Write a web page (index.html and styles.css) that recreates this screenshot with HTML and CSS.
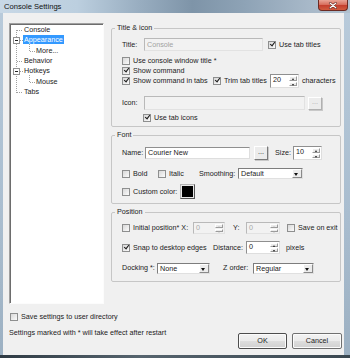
FILE: index.html
```html
<!DOCTYPE html>
<html lang="en">
<head>
    <meta charset="UTF-8">
    <link rel="stylesheet" href="styles.css">
    <title>Console Settings</title>
</head>
<body>
    <div class="window">
        <!-- title bar -->
        <div class="titlebar">
            <span class="title">Console Settings</span>
            <span class="close">
                <svg width="30" height="11" viewBox="0 0 30 11">
                    <path d="M12 3 L18 8 M18 3 L12 8" stroke="#5a1f18" stroke-width="2.6" stroke-linecap="round"/>
                    <path d="M12 3 L18 8 M18 3 L12 8" stroke="#fff" stroke-width="1.4" stroke-linecap="round"/>
                </svg>
            </span>
        </div>

        <div class="client">
            <div class="main">
                <!-- tree -->
                <div class="tree">
                    <svg class="tree-lines" width="93" height="80" viewBox="0 0 93 80">
                        <g stroke="#a0a0a0" stroke-width="1" stroke-dasharray="1 1" fill="none">
                            <path d="M6.5 6 V69"/>
                            <path d="M7 6.5 H13 M10 16.5 H13 M7 37.5 H13 M10 47.5 H13 M7 68.5 H13"/>
                            <path d="M19.5 20 V27 M20 27.5 H25 M19.5 51 V58 M20 58.5 H25"/>
                        </g>
                        <g stroke="#919191" fill="#fff">
                            <rect x="3.5" y="13.5" width="6" height="6"/>
                            <rect x="3.5" y="44.5" width="6" height="6"/>
                        </g>
                        <g stroke="#222">
                            <path d="M5 16.5 H8 M5 47.5 H8"/>
                        </g>
                    </svg>
                    <div class="node">Console</div>
                    <div class="node"><span class="selected">Appearance</span></div>
                    <div class="node child">More...</div>
                    <div class="node">Behavior</div>
                    <div class="node">Hotkeys</div>
                    <div class="node child">Mouse</div>
                    <div class="node">Tabs</div>
                </div>

                <div class="pages">
                    <!-- Title & icon -->
                    <fieldset class="group group-title">
                        <legend>Title &amp; icon</legend>
                        <div class="row row-a">
                            <span class="lbl w-22">Title:</span>
                            <span class="field disabled w-title">Console</span>
                            <label class="check ml-5"><span class="cb on"></span>Use tab titles</label>
                        </div>
                        <div class="row row-b">
                            <label class="check"><span class="cb"></span>Use console window title *</label>
                        </div>
                        <div class="row row-c">
                            <label class="check"><span class="cb on"></span>Show command</label>
                        </div>
                        <div class="row row-c">
                            <label class="check w-91"><span class="cb on"></span>Show command in tabs</label>
                            <label class="check w-57"><span class="cb on"></span>Trim tab titles</label>
                            <span class="spin w-29 h-14"><span class="val">20</span><span class="arrows"><i class="up"></i><i class="down"></i></span></span>
                            <span class="lbl ml-3">characters</span>
                        </div>
                        <div class="row row-e">
                            <span class="lbl w-22">Icon:</span>
                            <span class="field disabled w-icon"></span>
                            <span class="btn-small disabled ml-3">...</span>
                        </div>
                        <div class="row row-f">
                            <label class="check ml-21"><span class="cb on"></span>Use tab icons</label>
                        </div>
                    </fieldset>

                    <!-- Font -->
                    <fieldset class="group group-font">
                        <legend>Font</legend>
                        <div class="row row-name">
                            <span class="lbl w-23">Name:</span>
                            <span class="field w-name">Courier New</span>
                            <span class="btn-small h-14 ml-4">...</span>
                            <span class="lbl ml-7 w-18">Size:</span>
                            <span class="spin w-29 h-14"><span class="val">10</span><span class="arrows"><i class="up"></i><i class="down"></i></span></span>
                        </div>
                        <div class="row row-bold">
                            <label class="check w-36"><span class="cb"></span>Bold</label>
                            <label class="check w-41"><span class="cb"></span>Italic</label>
                            <span class="lbl w-39">Smoothing:</span>
                            <span class="select w-65"><span class="val">Default</span><span class="drop"></span></span>
                        </div>
                        <div class="row row-color">
                            <label class="check w-58"><span class="cb"></span>Custom color:</label>
                            <span class="swatch"></span>
                        </div>
                    </fieldset>

                    <!-- Position -->
                    <fieldset class="group group-pos">
                        <legend>Position</legend>
                        <div class="row row-p1">
                            <label class="check w-71"><span class="cb"></span>Initial position* X:</label>
                            <span class="spin disabled w-32 h-12"><span class="val">0</span><span class="arrows"><i class="up"></i><i class="down"></i></span></span>
                            <span class="lbl ml-8 w-13">Y:</span>
                            <span class="spin disabled w-34 h-12"><span class="val">0</span><span class="arrows"><i class="up"></i><i class="down"></i></span></span>
                            <label class="check ml-7"><span class="cb"></span>Save on exit</label>
                        </div>
                        <div class="row row-p2">
                            <label class="check w-91"><span class="cb on"></span>Snap to desktop edges</label>
                            <span class="lbl w-33">Distance:</span>
                            <span class="spin w-34 h-13"><span class="val">0</span><span class="arrows"><i class="up"></i><i class="down"></i></span></span>
                            <span class="lbl ml-6">pixels</span>
                        </div>
                        <div class="row row-p3">
                            <span class="lbl w-35">Docking *:</span>
                            <span class="select w-53"><span class="val">None</span><span class="drop"></span></span>
                            <span class="lbl ml-13 w-30">Z order:</span>
                            <span class="select w-61"><span class="val">Regular</span><span class="drop"></span></span>
                        </div>
                    </fieldset>
                </div>
            </div>

            <label class="check save-row"><span class="cb"></span>Save settings to user directory</label>

            <div class="footer">
                <span class="note">Settings marked with * will take effect after restart</span>
                <div class="buttons">
                    <span class="btn btn-default">OK</span>
                    <span class="btn btn-cancel">Cancel</span>
                </div>
            </div>
        </div>
        <div class="bottom-strip"></div>
    </div>
</body>
</html>
```

FILE: styles.css
```css
/* page */
body {
    margin: 0;
    font-family: "Liberation Sans", Arial, sans-serif;
    font-size: 7.2px;
    line-height: 10px;
    color: #1b1b1b;
    background: #4a5a66;
}

.window {
    width: 350px;
    height: 358px;
    display: flex;
    flex-direction: column;
    background: linear-gradient(180deg, #b9cbdb 0%, #a9bdcf 60%, #9cb0c2 100%);
    overflow: hidden;
}

/* title bar (aero glass) */
.titlebar {
    height: 13px;
    flex: none;
    display: flex;
    align-items: flex-start;
    background: linear-gradient(90deg, #c8d8e6 0%, #bccfdf 22%, #98adc0 40%, #7e94a8 55%, #8ea3b6 70%, #a7b8c8 88%, #b1c1cf 100%);
}

.title {
    font-size: 7.6px;
    line-height: 9px;
    padding: 2px 0 0 4px;
    color: #111;
}

.close {
    margin-left: auto;
    margin-right: 2px;
    width: 30px;
    height: 11px;
    display: flex;
    border: 1px solid #6b2a22;
    border-top: 0;
    border-radius: 0 0 4px 4px;
    box-sizing: border-box;
    background: linear-gradient(180deg, #e9a597 0%, #d8705f 45%, #c4402f 55%, #d15b3f 100%);
}

/* client area */
.client {
    height: 342px;
    flex: none;
    margin: 0 6px 0 3px;
    padding: 10px 2px 6px 6px;
    box-sizing: border-box;
    background: #f0f0f0;
    display: flex;
    flex-direction: column;
}

.bottom-strip {
    flex: 1;
    background: linear-gradient(90deg, #2f3b44, #56646e 40%, #3a4750);
}

.main {
    display: flex;
    gap: 7px;
}

/* tree view */
.tree {
    position: relative;
    width: 95px;
    height: 281px;
    box-sizing: border-box;
    padding-top: 1px;
    background: #fff;
    border: 1px solid;
    border-color: #a0a0a0 #fcfcfc #fcfcfc #a0a0a0;
    box-shadow: inset 1px 1px 0 #6d6d6d;
}

.tree-lines {
    position: absolute;
    left: 0;
    top: 0;
}

.node {
    height: 10.33px;
    line-height: 10.33px;
    padding-left: 14px;
    white-space: nowrap;
}

.node.child {
    padding-left: 26px;
}

.selected {
    display: inline-block;
    line-height: 9px;
    padding: 0 1px;
    margin-left: -1px;
    background: #3399ff;
    color: #fff;
}

/* group boxes */
.pages {
    width: 230px;
    display: flex;
    flex-direction: column;
    gap: 3px;
}

.group {
    margin: 0;
    padding: 0 4px 0 10px;
    min-width: 0;
    border: 1px solid #c6c6c6;
    border-radius: 2px;
}

.group legend {
    padding: 0 2px;
    margin-left: -7px;
    line-height: 10px;
}

.group-title { padding-bottom: 3px; }
.group-font { padding-bottom: 4px; }
.group-pos { padding-bottom: 7px; }

.row {
    display: flex;
    align-items: center;
    white-space: nowrap;
}

.row-a { margin-top: 5px; height: 13px; }
.row-b { margin-top: 5px; height: 9px; }
.row-c { margin-top: 1px; height: 10px; }
.row-c + .row-c { margin-top: 0; }
.row-e { margin-top: 10px; height: 14px; }
.row-f { margin-top: 3px; height: 10px; }

.row-name { margin-top: 6px; height: 14px; }
.row-bold { margin-top: 8px; height: 11px; }
.row-color { margin-top: 5px; height: 15px; }

.row-p1 { margin-top: 5px; height: 12px; }
.row-p2 { margin-top: 7px; height: 13px; }
.row-p3 { margin-top: 8px; height: 12px; }

/* checkboxes */
.check {
    display: flex;
    align-items: center;
    flex: none;
}

.cb {
    position: relative;
    width: 8px;
    height: 8px;
    flex: none;
    box-sizing: border-box;
    margin-right: 3px;
    border: 1px solid #8e8f8f;
    background: linear-gradient(135deg, #d8d8d8, #fbfbfb);
}

.cb.on::after {
    content: "";
    position: absolute;
    left: 2px;
    top: -1px;
    width: 2px;
    height: 4px;
    border: solid #1c1c1c;
    border-width: 0 1.5px 1.5px 0;
    transform: rotate(38deg);
}

/* text fields */
.lbl {
    flex: none;
}

.field {
    height: 13px;
    box-sizing: border-box;
    padding-left: 2px;
    line-height: 11px;
    border: 1px solid;
    border-color: #8f8f8f #dedede #dedede #8f8f8f;
    background: #fff;
    flex: none;
}

.field.w-name {
    height: 12px;
    line-height: 10px;
}

.field.disabled {
    height: 14px;
    background: #f2f2f2;
    color: #a2a2a2;
    border-color: #b9b9b9 #e2e2e2 #e2e2e2 #b9b9b9;
}

.row-a .field.disabled { height: 13px; }

.btn-small {
    width: 14px;
    height: 13px;
    box-sizing: border-box;
    flex: none;
    display: flex;
    align-items: center;
    justify-content: center;
    padding-bottom: 2px;
    border: 1px solid;
    border-color: #fff #7a7a7a #7a7a7a #fff;
    box-shadow: 1px 1px 0 #c8c8c8;
    background: #ececec;
}

.btn-small.disabled {
    color: #a8a8a8;
    border-color: #fff #b0b0b0 #b0b0b0 #fff;
}

/* spin boxes */
.spin {
    display: flex;
    box-sizing: border-box;
    flex: none;
    border: 1px solid;
    border-color: #8f8f8f #dedede #dedede #8f8f8f;
    background: #fff;
}

.spin .val {
    flex: 1;
    padding-left: 2px;
    line-height: 10px;
}

.spin.disabled {
    background: #f2f2f2;
    color: #a8a8a8;
    border-color: #b9b9b9 #e2e2e2 #e2e2e2 #b9b9b9;
}

.arrows {
    width: 8px;
    display: flex;
    flex-direction: column;
    margin: 1px;
    gap: 1px;
}

.arrows i {
    flex: 1;
    position: relative;
    background: #ebebeb;
    border: 1px solid;
    border-color: #fff #9a9a9a #9a9a9a #fff;
}

.arrows i::after {
    content: "";
    position: absolute;
    left: 2px;
    top: 1px;
    border-left: 1.5px solid transparent;
    border-right: 1.5px solid transparent;
}

.arrows .up::after { border-bottom: 2px solid #222; }
.arrows .down::after { border-top: 2px solid #222; }
.spin.disabled .arrows .up::after { border-bottom-color: #a0a0a0; }
.spin.disabled .arrows .down::after { border-top-color: #a0a0a0; }

/* drop-down lists */
.select {
    height: 11px;
    display: flex;
    flex: none;
    box-sizing: border-box;
    border: 1px solid;
    border-color: #7d7d7d #e0e0e0 #e0e0e0 #7d7d7d;
    background: #fff;
}

.select .val {
    flex: 1;
    padding-left: 2px;
    line-height: 9px;
}

.drop {
    width: 8px;
    position: relative;
    background: #ececec;
    border: 1px solid;
    border-color: #fff #8a8a8a #8a8a8a #fff;
}

.drop::after {
    content: "";
    position: absolute;
    left: 1px;
    top: 3px;
    border-left: 2.5px solid transparent;
    border-right: 2.5px solid transparent;
    border-top: 3px solid #111;
}

.swatch {
    width: 15px;
    height: 15px;
    flex: none;
    box-sizing: border-box;
    border: 1px solid;
    border-color: #b4b4b4 #555 #555 #b4b4b4;
    box-shadow: inset 0 0 0 1px #e8e8e8;
    padding: 1px;
    background: #000 content-box;
}

/* widths */
.w-13 { width: 13px; }
.w-18 { width: 18px; }
.w-22 { width: 22px; }
.w-23 { width: 23px; }
.w-29 { width: 29px; }
.w-30 { width: 30px; }
.w-32 { width: 32px; }
.w-33 { width: 33px; }
.w-34 { width: 34px; }
.w-35 { width: 35px; }
.w-36 { width: 36px; }
.w-39 { width: 39px; }
.w-41 { width: 41px; }
.w-53 { width: 53px; }
.w-57 { width: 57px; }
.w-58 { width: 58px; }
.w-61 { width: 61px; }
.w-65 { width: 65px; }
.w-71 { width: 71px; }
.w-91 { width: 91px; }
.w-title { width: 119px; }
.w-icon { width: 161px; }
.w-name { width: 105px; }

.h-12 { height: 12px; }
.h-13 { height: 13px; }
.h-14 { height: 14px; }

.ml-3 { margin-left: 3px; }
.ml-4 { margin-left: 4px; }
.ml-5 { margin-left: 5px; }
.ml-6 { margin-left: 6px; }
.ml-7 { margin-left: 7px; }
.ml-8 { margin-left: 8px; }
.ml-13 { margin-left: 13px; }
.ml-21 { margin-left: 21px; }

/* bottom part */
.save-row {
    margin: 8px 0 0 1px;
    height: 10px;
}

.footer {
    margin-top: 6px;
    display: flex;
    align-items: flex-start;
}

.note {
    line-height: 10px;
}

.buttons {
    margin: 5px 0 0 auto;
    display: flex;
    gap: 5px;
}

.btn {
    width: 50px;
    height: 16px;
    box-sizing: border-box;
    display: flex;
    align-items: center;
    justify-content: center;
    border: 1px solid #707070;
    border-radius: 2px;
    box-shadow: inset 0 0 0 1px #fbfbfb;
    background: linear-gradient(180deg, #f3f3f3 0%, #ebebeb 48%, #dddddd 52%, #d0d0d0 100%);
}

.btn-default {
    width: 49px;
    border-color: #4d4d4d;
}
```
